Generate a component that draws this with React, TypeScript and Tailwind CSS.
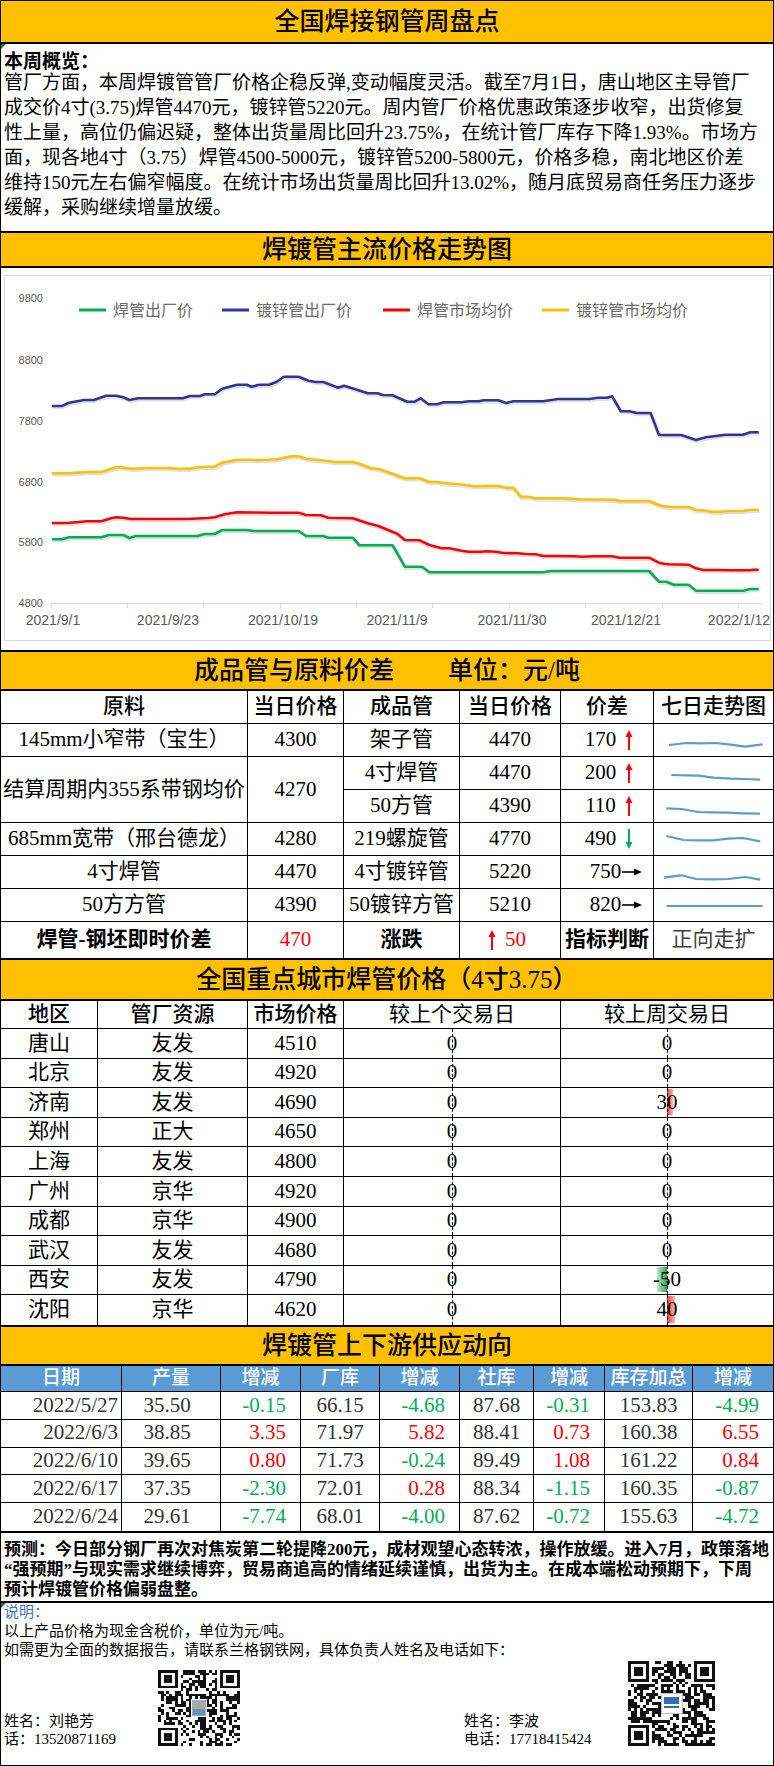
import React from 'react';

type Pt = [number, number];

// chart series, measured in reference zoom space
const green: Pt[] = [[105,928],[125,928],[140,922],[205,922],[220,915],[250,915],[262,924],[275,918],[400,918],[415,912],[435,912],[450,900],[500,900],[515,903],[605,903],[620,918],[655,918],[665,923],[715,923],[728,946],[795,946],[805,970],[820,1010],[855,1010],[870,1027],[1100,1027],[1115,1023],[1315,1023],[1335,1055],[1350,1055],[1365,1064],[1395,1064],[1410,1082],[1505,1082],[1520,1077],[1537,1077]];
const blue: Pt[] = [[105,528],[125,528],[140,518],[170,510],[190,510],[215,497],[235,497],[250,502],[262,510],[280,505],[370,505],[385,498],[405,498],[415,493],[435,493],[450,476],[480,464],[500,464],[510,470],[525,464],[545,464],[560,456],[575,440],[605,440],[625,452],[640,456],[655,456],[685,473],[697,467],[720,478],[745,490],[765,490],[775,495],[795,496],[825,515],[840,515],[852,505],[868,523],[885,523],[900,517],[935,517],[950,514],[970,514],[980,511],[1010,511],[1025,519],[1040,514],[1100,514],[1130,507],[1195,507],[1210,503],[1230,503],[1240,499],[1258,544],[1275,544],[1290,549],[1318,549],[1335,615],[1380,615],[1410,630],[1430,622],[1470,614],[1505,614],[1520,607],[1537,607]];
const red: Pt[] = [[105,879],[135,879],[160,876],[175,874],[205,874],[225,865],[235,862],[250,863],[265,867],[370,867],[390,866],[420,864],[435,862],[455,853],[480,847],[550,848],[605,848],[620,855],[650,856],[665,863],[715,865],[730,872],[745,880],[765,887],[805,911],[820,930],[850,931],[870,945],[895,955],[910,955],[935,962],[950,965],[975,965],[985,964],[1005,965],[1020,969],[1050,970],[1065,972],[1085,973],[1100,978],[1135,978],[1165,979],[1180,980],[1205,979],[1240,979],[1255,983],[1315,983],[1335,998],[1345,1001],[1355,1003],[1395,1004],[1410,1015],[1425,1020],[1460,1020],[1480,1021],[1520,1021],[1525,1019],[1537,1019]];
const yellow: Pt[] = [[105,730],[140,730],[150,728],[180,726],[205,726],[235,712],[245,712],[265,716],[300,714],[340,714],[360,716],[385,716],[400,712],[420,710],[435,710],[450,698],[480,689],[505,689],[520,690],[545,689],[560,688],[590,679],[605,679],[620,686],[660,692],[680,696],[715,696],[730,702],[750,714],[770,718],[795,731],[820,745],[850,745],[870,756],[885,756],[900,759],[940,764],[960,769],[980,768],[1010,767],[1025,773],[1040,773],[1055,800],[1070,800],[1085,805],[1140,805],[1175,808],[1245,809],[1255,813],[1315,813],[1340,828],[1360,831],[1395,831],[1410,840],[1425,841],[1440,845],[1460,845],[1475,843],[1505,843],[1520,839],[1537,839]];

const toSvg = (pts: Pt[]) =>
  pts.map(([x, y]) => `${(x * 0.4936).toFixed(1)},${(y / 3 - 38).toFixed(1)}`).join(' ');

const summaryLines = [
  '管厂方面，本周焊镀管管厂价格企稳反弹,变动幅度灵活。截至7月1日，唐山地区主导管厂',
  '成交价4寸(3.75)焊管4470元，镀锌管5220元。周内管厂价格优惠政策逐步收窄，出货修复',
  '性上量，高位仍偏迟疑，整体出货量周比回升23.75%，在统计管厂库存下降1.93%。市场方',
  '面，现各地4寸（3.75）焊管4500-5000元，镀锌管5200-5800元，价格多稳，南北地区价差',
  '维持150元左右偏窄幅度。在统计市场出货量周比回升13.02%，随月底贸易商任务压力逐步',
  '缓解，采购继续增量放缓。',
];

function CommentMark() {
  return (
    <div className="absolute left-0 top-0 h-0 w-0 border-t-[5px] border-r-[5px] border-t-[#00803a] border-r-transparent" />
  );
}

function TitleBar({ h, children }: { h: string; children: React.ReactNode }) {
  return (
    <div className={`${h} shrink-0 flex items-center justify-center bg-[#FFC000] border-y-2 border-black text-[25px] font-medium whitespace-nowrap`}>
      {children}
    </div>
  );
}

function TrendChart() {
  const yLabels: [string, number][] = [['9800', 30], ['8800', 92], ['7800', 153], ['6800', 214], ['5800', 274], ['4800', 335]];
  const ticks = [51, 127, 203, 280, 356, 432, 509, 585, 662, 738];
  const xLabels: [string, number][] = [['2021/9/1', 53], ['2021/9/23', 168], ['2021/10/19', 283], ['2021/11/9', 397], ['2021/11/30', 512], ['2021/12/21', 626], ['2022/1/12', 739]];
  const series = [
    { pts: green, color: '#00B050' },
    { pts: blue, color: '#333399' },
    { pts: red, color: '#FF0000' },
    { pts: yellow, color: '#FFC000' },
  ];
  const legend = [
    { x: 79, label: '焊管出厂价', color: '#00B050' },
    { x: 222, label: '镀锌管出厂价', color: '#333399' },
    { x: 383, label: '焊管市场均价', color: '#FF0000' },
    { x: 542, label: '镀锌管市场均价', color: '#FFC000' },
  ];
  return (
    <div className="h-[382px] shrink-0 overflow-hidden">
      <svg width="772" height="382" viewBox="1 0 772 382" className="block">
        <rect x="4.5" y="7.5" width="766" height="365" fill="#fff" stroke="#D9D9D9" />
        {yLabels.map(([t, y]) => (
          <text key={t} x="43" y={y + 4} textAnchor="end" fontSize="11" fill="#595959" fontFamily="'Liberation Sans', sans-serif">
            {t}
          </text>
        ))}
        <line x1="50" y1="335.5" x2="762" y2="335.5" stroke="#D9D9D9" />
        {ticks.map((x) => (
          <line key={x} x1={x + 0.5} y1="335" x2={x + 0.5} y2="340" stroke="#D9D9D9" />
        ))}
        {xLabels.map(([t, x]) => (
          <text key={t} x={x} y="357" textAnchor="middle" fontSize="14" fill="#595959" fontFamily="'Liberation Sans', sans-serif">
            {t}
          </text>
        ))}
        {legend.map((l) => (
          <g key={l.label}>
            <line x1={l.x} y1="42" x2={l.x + 27} y2="42" stroke={l.color} strokeWidth="3" />
            <text x={l.x + 34} y="48" fontSize="16" fill="#6b6b6b" fontFamily="'Noto Sans CJK SC', sans-serif">
              {l.label}
            </text>
          </g>
        ))}
        {series.map((s) => (
          <g key={s.color}>
            <polyline points={toSvg(s.pts)} fill="none" stroke="#000" strokeOpacity="0.12" strokeWidth="4" transform="translate(0.8 1.2)" strokeLinejoin="round" />
            <polyline points={toSvg(s.pts)} fill="none" stroke={s.color} strokeWidth="2.6" strokeLinejoin="round" />
          </g>
        ))}
      </svg>
    </div>
  );
}

function Spark({ pts, top }: { pts: Pt[]; top: number }) {
  const d = pts.map(([x, y]) => `${(x * 0.4936 - 654).toFixed(1)},${((y - top) / 3).toFixed(1)}`).join(' ');
  return (
    <svg width="119" height="32" className="block">
      <polyline points={d} fill="none" stroke="#5B9BD5" strokeWidth="2.2" strokeLinejoin="round" />
    </svg>
  );
}

function UpArrow() {
  return (
    <svg width="8" height="20" viewBox="0 0 8 20" className="block">
      <rect x="3" y="5" width="2" height="15" fill="#FF0000" />
      <polygon points="4,0 0.5,7 7.5,7" fill="#FF0000" />
    </svg>
  );
}

function DownArrow() {
  return (
    <svg width="8" height="20" viewBox="0 0 8 20" className="block">
      <rect x="3" y="0" width="2" height="15" fill="#00B050" />
      <polygon points="4,20 0.5,13 7.5,13" fill="#00B050" />
    </svg>
  );
}

function RightArrow() {
  return (
    <svg width="20" height="10" viewBox="0 0 20 10" className="block">
      <rect x="0" y="4.2" width="14" height="1.6" fill="#000" />
      <polygon points="20,5 12,1.5 12,8.5" fill="#000" />
    </svg>
  );
}

function Diff({ v, dir }: { v: string; dir: 'up' | 'down' | 'right' }) {
  return (
    <div className={`flex items-center pl-[4px] ${dir === 'right' ? 'gap-[1px] pl-[18px]' : 'gap-[9px]'}`}>
      <span>{v}</span>
      {dir === 'up' && <UpArrow />}
      {dir === 'down' && <DownArrow />}
      {dir === 'right' && <RightArrow />}
    </div>
  );
}

const c = 'flex items-center justify-center border-r border-b border-black whitespace-nowrap';
const cl = 'flex items-center justify-center border-b border-black whitespace-nowrap';

function SpreadTable() {
  return (
    <div className="grid shrink-0 grid-cols-[247px_96px_116px_101px_93px_1fr] grid-rows-[33px_33px_33px_33px_33px_33px_33px_36px] text-[21px]">
      <div className={`${c} font-medium`}>原料</div>
      <div className={`${c} font-medium`}>当日价格</div>
      <div className={`${c} font-medium`}>成品管</div>
      <div className={`${c} font-medium`}>当日价格</div>
      <div className={`${c} font-medium`}>价差</div>
      <div className={`${cl} font-medium`}>七日走势图</div>

      <div className={c}>145mm小窄带（宝生）</div>
      <div className={c}>4300</div>
      <div className={c}>架子管</div>
      <div className={c}>4470</div>
      <div className={c}><Diff v="170" dir="up" /></div>
      <div className={`${cl} items-start`}><Spark top={252} pts={[[1355,315],[1390,309],[1420,310],[1450,309],[1480,314],[1510,320],[1545,313]]} /></div>

      <div className={`${c} row-span-2`}>结算周期内355系带钢均价</div>
      <div className={`${c} row-span-2`}>4270</div>
      <div className={c}>4寸焊管</div>
      <div className={c}>4470</div>
      <div className={c}><Diff v="200" dir="up" /></div>
      <div className={`${cl} items-start`}><Spark top={351} pts={[[1360,405],[1390,406],[1415,407],[1445,413],[1480,416],[1510,417],[1540,419]]} /></div>

      <div className={c}>50方管</div>
      <div className={c}>4390</div>
      <div className={c}><Diff v="110" dir="up" /></div>
      <div className={`${cl} items-start`}><Spark top={450} pts={[[1350,505],[1380,507],[1415,516],[1445,517],[1475,518],[1505,520],[1540,521]]} /></div>

      <div className={c}>685mm宽带（邢台德龙）</div>
      <div className={c}>4280</div>
      <div className={c}>219螺旋管</div>
      <div className={c}>4770</div>
      <div className={c}><Diff v="490" dir="down" /></div>
      <div className={`${cl} items-start`}><Spark top={549} pts={[[1350,588],[1385,600],[1415,601],[1445,601],[1475,596],[1505,594],[1540,604]]} /></div>

      <div className={c}>4寸焊管</div>
      <div className={c}>4470</div>
      <div className={c}>4寸镀锌管</div>
      <div className={c}>5220</div>
      <div className={c}><Diff v="750" dir="right" /></div>
      <div className={`${cl} items-start`}><Spark top={648} pts={[[1345,713],[1380,706],[1410,717],[1445,718],[1475,717],[1510,711],[1540,719]]} /></div>

      <div className={c}>50方方管</div>
      <div className={c}>4390</div>
      <div className={c}>50镀锌方管</div>
      <div className={c}>5210</div>
      <div className={c}><Diff v="820" dir="right" /></div>
      <div className={`${cl} items-start`}><Spark top={747} pts={[[1350,798],[1545,798]]} /></div>

      <div className={`${c} border-b-0 font-bold`}>焊管-钢坯即时价差</div>
      <div className={`${c} border-b-0 text-[#FF0000]`}>470</div>
      <div className={`${c} border-b-0 font-bold`}>涨跌</div>
      <div className={`${c} border-b-0 text-[#FF0000]`}>
        <div className="flex items-center gap-[9px] pr-[6px]">
          <UpArrow />
          <span>50</span>
        </div>
      </div>
      <div className={`${c} border-b-0 font-bold`}>指标判断</div>
      <div className={`${cl} border-b-0 text-[#404040]`}>正向走扩</div>
    </div>
  );
}

function BarCell({ v, edge, last }: { v: number; edge?: boolean; last?: boolean }) {
  return (
    <div className={`relative ${edge ? cl : c} ${last ? 'border-b-0' : ''}`}>
      {v > 0 && (
        <div className="absolute left-1/2 top-[1px] bottom-[2px] bg-linear-to-r from-[#FF1A1A] to-[#FFB3B3]" style={{ width: v * 0.2 }} />
      )}
      {v < 0 && (
        <div className="absolute right-1/2 top-[1px] bottom-[2px] bg-linear-to-l from-[#00A84A] to-[#B8E6C8]" style={{ width: -v * 0.2 }} />
      )}
      <div className="absolute left-1/2 top-0 bottom-0 border-l border-dashed border-black" />
      <span className="relative">{v}</span>
    </div>
  );
}

const cities: [string, string, string, number][] = [
  ['唐山', '友发', '4510', 0],
  ['北京', '友发', '4920', 0],
  ['济南', '友发', '4690', 30],
  ['郑州', '正大', '4650', 0],
  ['上海', '友发', '4800', 0],
  ['广州', '京华', '4920', 0],
  ['成都', '京华', '4900', 0],
  ['武汉', '友发', '4680', 0],
  ['西安', '友发', '4790', -50],
  ['沈阳', '京华', '4620', 40],
];

function CityTable() {
  return (
    <div className="grid shrink-0 grid-cols-[97px_150px_96px_217px_1fr] grid-rows-[28px_repeat(10,29.6px)] text-[21px]">
      <div className={`${c} font-medium`}>地区</div>
      <div className={`${c} font-medium`}>管厂资源</div>
      <div className={`${c} font-medium`}>市场价格</div>
      <div className={c}>较上个交易日</div>
      <div className={cl}>较上周交易日</div>
      {cities.map(([city, mill, price, wk], i) => {
        const last = i === cities.length - 1;
        return (
          <React.Fragment key={city}>
            <div className={`${c} ${last ? 'border-b-0' : ''}`}>{city}</div>
            <div className={`${c} ${last ? 'border-b-0' : ''}`}>{mill}</div>
            <div className={`${c} ${last ? 'border-b-0' : ''}`}>{price}</div>
            <BarCell v={0} last={last} />
            <BarCell v={wk} edge last={last} />
          </React.Fragment>
        );
      })}
    </div>
  );
}

const supply: string[][] = [
  ['2022/5/27', '35.50', '-0.15', '66.15', '-4.68', '87.68', '-0.31', '153.83', '-4.99'],
  ['2022/6/3', '38.85', '3.35', '71.97', '5.82', '88.41', '0.73', '160.38', '6.55'],
  ['2022/6/10', '39.65', '0.80', '71.73', '-0.24', '89.49', '1.08', '161.22', '0.84'],
  ['2022/6/17', '37.35', '-2.30', '72.01', '0.28', '88.34', '-1.15', '160.35', '-0.87'],
  ['2022/6/24', '29.61', '-7.74', '68.01', '-4.00', '87.62', '-0.72', '155.63', '-4.72'],
];

const supplyHead = ['日期', '产量', '增减', '厂库', '增减', '社库', '增减', '库存加总', '增减'];

function SupplyTable() {
  return (
    <div className="grid shrink-0 grid-cols-[121px_99px_80px_79px_80px_74px_71px_88px_1fr] grid-rows-[26px_repeat(5,27.8px)] text-[21px] text-[#333]">
      {supplyHead.map((h, i) => (
        <div
          key={i}
          className={`flex items-center justify-center border-b border-black bg-[#5B9BD5] text-[19px] font-medium text-white ${i < 8 ? 'border-r' : ''}`}
        >
          {h}
        </div>
      ))}
      {supply.map((row, r) =>
        row.map((v, i) => {
          const last = r === supply.length - 1;
          const delta = i === 2 || i === 4 || i === 6 || i === 8;
          const color = delta ? (v.startsWith('-') ? 'text-[#00B050]' : 'text-[#FF0000]') : '';
          const align = i === 0 ? 'justify-end pr-[3px]' : delta ? 'justify-end pr-[14px]' : 'justify-center';
          return (
            <div
              key={`${r}-${i}`}
              className={`flex items-center whitespace-nowrap border-black ${align} ${color} ${i < 8 ? 'border-r' : ''} ${last ? '' : 'border-b'} ${i === 1 ? 'pr-[8px]' : ''}`}
            >
              {v}
            </div>
          );
        })
      )}
    </div>
  );
}

function Qr({ w, h, seed, logo }: { w: number; h: number; seed: number; logo: 'photo' | 'badge' }) {
  const n = 29;
  let s = seed;
  const rnd = () => {
    s = (Math.imul(s, 1103515245) + 12345) >>> 0;
    return (s >>> 8) / 16777216;
  };
  const reserved = (x: number, y: number) =>
    (x < 8 && y < 8) || (x >= n - 8 && y < 8) || (x < 8 && y >= n - 8);
  const mods: [number, number][] = [];
  for (let y = 0; y < n; y++) {
    for (let x = 0; x < n; x++) {
      if (reserved(x, y)) continue;
      if (rnd() < 0.52) mods.push([x, y]);
    }
  }
  const finders: [number, number][] = [[0, 0], [n - 7, 0], [0, n - 7]];
  return (
    <svg width={w} height={h} viewBox={`0 0 ${n} ${n}`} preserveAspectRatio="none" shapeRendering="crispEdges" className="block shrink-0">
      <rect width={n} height={n} fill="#fff" />
      {mods.map(([x, y]) => (
        <rect key={`${x}-${y}`} x={x} y={y} width="1" height="1" fill="#111" />
      ))}
      {finders.map(([x, y]) => (
        <g key={`${x}-${y}`}>
          <rect x={x} y={y} width="7" height="7" fill="#111" />
          <rect x={x + 1} y={y + 1} width="5" height="5" fill="#fff" />
          <rect x={x + 2} y={y + 2} width="3" height="3" fill="#111" />
        </g>
      ))}
      {logo === 'photo' ? (
        <g>
          <rect x="11.5" y="11" width="6" height="7" fill="#fff" />
          <rect x="12" y="11.5" width="5" height="6" fill="#8FAFD0" />
          <rect x="13" y="12.5" width="3" height="2" fill="#C8A46A" />
          <rect x="12.5" y="15" width="4" height="2" fill="#6E8FB5" />
        </g>
      ) : (
        <g>
          <rect x="11" y="11" width="7" height="7" fill="#fff" stroke="#bbb" strokeWidth="0.3" />
          <rect x="12" y="12.3" width="5" height="2.4" fill="#2F6DB5" />
          <rect x="12" y="15.3" width="5" height="0.9" fill="#2F6DB5" />
        </g>
      )}
    </svg>
  );
}

export default function App() {
  return (
    <div className="flex h-[1766px] w-[774px] flex-col border border-black bg-white text-black font-['Liberation_Serif','Noto_Sans_CJK_SC',serif]">
      <div className="flex h-[43px] shrink-0 items-center justify-center border-b-2 border-black bg-[#FFC000] text-[25px] font-medium">
        全国焊接钢管周盘点
      </div>

      <div className="relative h-[187px] shrink-0 pl-[3px] pt-[10px] text-[19px]">
        <CommentMark />
        <div className="font-bold leading-[16px]">本周概览：</div>
        <div className="whitespace-nowrap leading-[25px]">
          {summaryLines.map((l) => (
            <div key={l}>{l}</div>
          ))}
        </div>
      </div>

      <TitleBar h="h-[37px]">焊镀管主流价格走势图</TitleBar>
      <TrendChart />

      <TitleBar h="h-[41px]">
        <span>成品管与原料价差</span>
        <span className="ml-[54px]">单位：元/吨</span>
      </TitleBar>
      <SpreadTable />

      <TitleBar h="h-[43px]">全国重点城市焊管价格（4寸3.75）</TitleBar>
      <CityTable />

      <TitleBar h="h-[41px]">焊镀管上下游供应动向</TitleBar>
      <SupplyTable />

      <div className="h-[72px] shrink-0 whitespace-nowrap border-y-2 border-black pl-[3px] pt-[7px] text-[17px] font-bold leading-[20px]">
        <div>预测：今日部分钢厂再次对焦炭第二轮提降200元，成材观望心态转浓，操作放缓。进入7月，政策落地</div>
        <div>“强预期”与现实需求继续博弈，贸易商追高的情绪延续谨慎，出货为主。在成本端松动预期下，下周</div>
        <div>预计焊镀管价格偏弱盘整。</div>
      </div>

      <div className="relative flex-1 whitespace-nowrap pl-[3px] text-[15px] leading-[19px]">
        <CommentMark />
        <div className="text-[#4472C4]">说明：</div>
        <div>以上产品价格为现金含税价，单位为元/吨。</div>
        <div>如需更为全面的数据报告，请联系兰格钢铁网，具体负责人姓名及电话如下：</div>
        <div className="flex h-[86px] items-end">
          <div className="mb-[-2px] w-[154px] leading-[18px]">
            <div>姓名：刘艳芳</div>
            <div>话：13520871169</div>
          </div>
          <Qr w={82} h={76} seed={7} logo="photo" />
          <div className="w-[224px]" />
          <div className="mb-[-2px] w-[164px] leading-[18px]">
            <div>姓名：李波</div>
            <div>电话：17718415424</div>
          </div>
          <Qr w={87} h={85} seed={31} logo="badge" />
        </div>
      </div>
    </div>
  );
}
